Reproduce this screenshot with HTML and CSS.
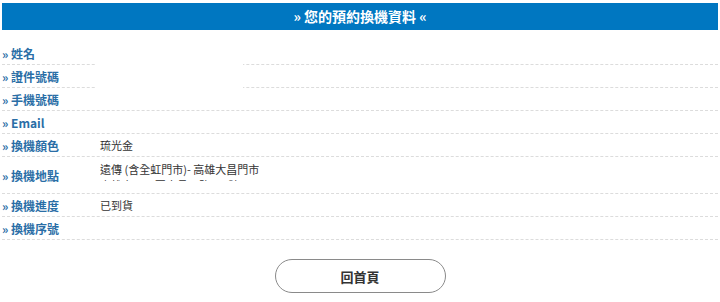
FILE: index.html
```html
<!DOCTYPE html>
<html lang="zh-Hant">
<head>
<meta charset="UTF-8">
<meta name="viewport" content="width=device-width, initial-scale=1.0">
<title>您的預約換機資料</title>
<link rel="stylesheet" href="styles.css">
</head>
<body>

<div class="page">
  <h2 class="title">» 您的預約換機資料 «</h2>

  <div class="info">
    <div class="row">
      <div class="label">» 姓名</div>
      <div class="value"></div>
    </div>
    <div class="row">
      <div class="label">» 證件號碼</div>
      <div class="value"></div>
    </div>
    <div class="row">
      <div class="label">» 手機號碼</div>
      <div class="value"></div>
    </div>
    <div class="row">
      <div class="label">» Email</div>
      <div class="value"></div>
    </div>
    <div class="row">
      <div class="label">» 換機顏色</div>
      <div class="value">琉光金</div>
    </div>
    <div class="row tall">
      <div class="label">» 換機地點</div>
      <div class="value clip">遠傳 (含全虹門市)- 高雄大昌門市<br>高雄市三民區大昌二路301號</div>
    </div>
    <div class="row">
      <div class="label">» 換機進度</div>
      <div class="value">已到貨</div>
    </div>
    <div class="row">
      <div class="label">» 換機序號</div>
      <div class="value"></div>
    </div>

    <!-- personal data hidden -->
    <div class="mask"></div>
  </div>

  <div class="buttons">
    <button class="home">回首頁</button>
  </div>
</div>

</body>
</html>
```

FILE: styles.css
```css
body {
  font-family: "Noto Sans CJK TC", "Noto Sans", Arial, sans-serif;
  background-color: #fff;
  margin: 0;
  padding: 3px 2px;
}
.title {
  margin: 0;
  height: 27px;
  line-height: 27px;
  background-color: #0077c1;
  color: #fff;
  font-size: 14px;
  font-weight: bold;
  text-align: center;
}
.info {
  position: relative;
  margin-top: 12px;
}
.row {
  display: flex;
  align-items: center;
  height: 22px;
  border-bottom: 1px dashed #dcdcdc;
}
.row.tall {
  height: 36px;
}
.label {
  width: 98px;
  flex-shrink: 0;
  font-size: 12px;
  font-weight: bold;
  color: #2a6ea6;
}
.value {
  font-size: 11px;
  color: #333;
  line-height: 16px;
}
.value.clip {
  align-self: flex-start;
  margin-top: 4px;
  height: 20px;
  overflow: hidden;
}
.mask {
  position: absolute;
  left: 93px;
  top: -4px;
  width: 148px;
  height: 72px;
  background-color: #fff;
}
.buttons {
  display: flex;
  justify-content: center;
  margin-top: 19px;
}
.home {
  width: 171px;
  height: 34px;
  background-color: #fff;
  border: 1px solid #8a8a8a;
  border-radius: 17px;
  font-family: inherit;
  font-size: 13px;
  font-weight: bold;
  color: #333;
  cursor: pointer;
}
```
